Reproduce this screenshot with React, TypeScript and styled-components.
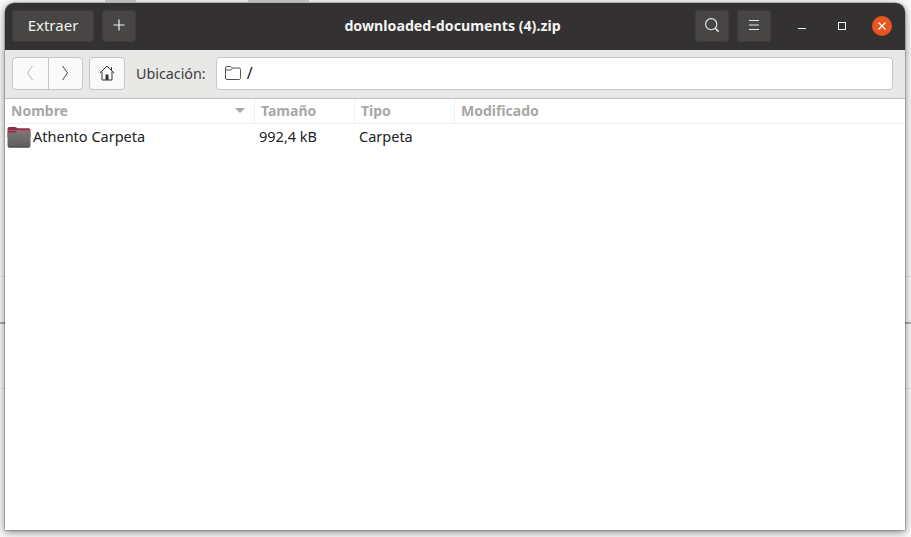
import React from "react";
import styled, { createGlobalStyle } from "styled-components";

const Global = createGlobalStyle`
  html, body { margin: 0; padding: 0; width: 911px; height: 537px; overflow: hidden; background: #fff; }
  * { box-sizing: border-box; }
`;

const Desktop = styled.div`
  width: 911px;
  height: 537px;
  padding: 3px 6px 7px 5px;
  font-family: "Noto Sans", sans-serif;
  background:
    linear-gradient(#a9adb2, #a9adb2) 0 322px / 100% 2px no-repeat,
    linear-gradient(#e2e2e2, #e2e2e2) 0 276px / 100% 1px no-repeat,
    linear-gradient(#e2e2e2, #e2e2e2) 0 388px / 100% 1px no-repeat,
    linear-gradient(#d0d0d0, #d0d0d0) 105px 0 / 31px 2px no-repeat,
    linear-gradient(#d0d0d0, #d0d0d0) 248px 0 / 61px 2px no-repeat,
    #fafafa;
`;

const Window = styled.div`
  width: 900px;
  height: 527px;
  display: flex;
  flex-direction: column;
  border-radius: 9px 9px 0 0;
  background: #fff;
  box-shadow: 0 0 0 0.5px rgba(0, 0, 0, 0.35), 0 2px 9px rgba(0, 0, 0, 0.5);
  overflow: hidden;
`;

const TitleBar = styled.header`
  height: 47px;
  flex: none;
  display: flex;
  align-items: center;
  padding: 0 3px 1px 7px;
  background: #333131;
  color: #fff;
`;

const HeaderButton = styled.button<{ $w: number }>`
  width: ${(p) => p.$w}px;
  height: 32px;
  flex: none;
  margin-right: 8px;
  padding: 0 0 2px;
  display: flex;
  align-items: center;
  justify-content: center;
  border: 0;
  border-radius: 4px;
  background: #474645;
  box-shadow: inset 0 0 0 1px #3e3d3c;
  color: #f2f2f2;
  font: 15px "Noto Sans", sans-serif;
`;

const Title = styled.h1`
  flex: 1;
  margin: 0;
  padding: 0 0 2px 66px;
  text-align: center;
  font-size: 14.2px;
  font-weight: 700;
  color: #f4f4f4;
`;

const WindowControls = styled.div`
  display: flex;
  flex: none;
  margin-left: 3px;
`;

const WindowControl = styled.button`
  width: 40px;
  height: 32px;
  padding: 0;
  display: flex;
  align-items: center;
  justify-content: center;
  border: 0;
  background: none;
`;

const CloseDot = styled.span`
  width: 20px;
  height: 20px;
  border-radius: 50%;
  background: #e95420;
  display: flex;
  align-items: center;
  justify-content: center;
`;

const LocationBar = styled.nav`
  height: 49px;
  flex: none;
  display: flex;
  align-items: center;
  padding: 0 12px 2px 7px;
  background: #e8e8e7;
  border-bottom: 1px solid #bdbdbd;
`;

const NavGroup = styled.div`
  display: flex;
  height: 33px;
  margin-right: 6px;
  border: 1px solid #c6c6c4;
  border-radius: 4px;
  background: #fafafa;
  overflow: hidden;
`;

const NavButton = styled.button`
  width: 34.5px;
  padding: 0;
  display: flex;
  align-items: center;
  justify-content: center;
  border: 0;
  background: none;
  & + & { border-left: 1px solid #c6c6c4; }
`;

const HomeButton = styled(NavButton)`
  width: 34px;
`;

const LocationLabel = styled.span`
  margin: 0 10px 0 5px;
  font-size: 14.3px;
  color: #3d3d3d;
`;

const PathField = styled.div`
  flex: 1;
  height: 33px;
  display: flex;
  align-items: center;
  gap: 6px;
  padding-left: 8px;
  border: 1px solid #c6c6c4;
  border-radius: 4px;
  background: #fff;
  font-size: 16px;
  color: #222;
`;

const Columns = styled.div`
  display: grid;
  grid-template-columns: 249px 100px 100px 1fr;
`;

const HeaderRow = styled(Columns)`
  height: 25px;
  flex: none;
  border-bottom: 1px solid #f0f0ef;
`;

const HeaderCell = styled.div`
  display: flex;
  align-items: center;
  justify-content: space-between;
  padding: 0 9px 1px 6px;
  font-size: 14px;
  font-weight: 700;
  color: #a7a7a5;
  & + & { border-left: 1px solid #f0f0ef; }
`;

const Caret = styled.span`
  width: 0;
  height: 0;
  border-left: 5px solid transparent;
  border-right: 5px solid transparent;
  border-top: 5px solid #a7a7a5;
`;

const FileRow = styled(Columns)`
  height: 25px;
  flex: none;
  align-items: center;
  font-size: 14.5px;
  color: #222;
`;

const NameCell = styled.div`
  display: flex;
  align-items: center;
  gap: 2px;
  padding-left: 2px;
`;

const FileName = styled.span`
  margin-bottom: 2px;
`;

const DataCell = styled.div`
  padding: 0 0 2px 5px;
`;

const FolderIcon = () => (
  <svg width="24" height="24" viewBox="0 0 24 24">
    <defs>
      <linearGradient id="folderFront" x1="0" y1="0" x2="0" y2="1">
        <stop offset="0" stopColor="#7b7978" />
        <stop offset="1" stopColor="#5f5d5c" />
      </linearGradient>
    </defs>
    <path d="M.5 4a2 2 0 0 1 2-2h5.500c1.200 0 1.600 1.200 3 1.200h10.500a2 2 0 0 1 2 2V12H.5z" fill="#8d2c4c" />
    <path d="M1 5.500h22" stroke="#c9625d" strokeWidth="1" fill="none" opacity=".7" />
    <path d="M.5 8.500a1 1 0 0 1 1-1h6.300c1 0 1.600-1.600 2.800-1.600h12.400a.5.500 0 0 1 .5.500v14.100a2 2 0 0 1-2 2h-19a2 2 0 0 1-2-2z" fill="url(#folderFront)" />
    <path d="M1.500 22h21" stroke="#444342" strokeWidth="1" />
  </svg>
);

const App = () => (
  <>
    <Global />
    <Desktop>
      <Window>
        <TitleBar>
          <HeaderButton $w={82}>Extraer</HeaderButton>
          <HeaderButton $w={34}>
            <svg width="14" height="14" viewBox="0 0 14 14"><path d="M7 1.500v11M1.500 7h11" stroke="#f2f2f2" strokeWidth="1.2" /></svg>
          </HeaderButton>
          <Title>downloaded-documents (4).zip</Title>
          <HeaderButton $w={34}>
            <svg width="16" height="16" viewBox="0 0 16 16" fill="none" stroke="#e8e8e8" strokeWidth="1.1"><circle cx="7.200" cy="7.200" r="5.600" /><path d="M11.200 11.200l3.400 3.400" strokeWidth="1.500" /></svg>
          </HeaderButton>
          <HeaderButton $w={34}>
            <svg width="12" height="12" viewBox="0 0 12 12" stroke="#e8e8e8" strokeWidth="1"><path d="M1 1.500h10M1 6h10M1 10.500h10" /></svg>
          </HeaderButton>
          <WindowControls>
            <WindowControl>
              <svg width="10" height="10" viewBox="0 0 10 10"><path d="M1 7.500h8" stroke="#f2f2f2" strokeWidth="1" /></svg>
            </WindowControl>
            <WindowControl>
              <svg width="10" height="10" viewBox="0 0 10 10" fill="none"><rect x="1.500" y="1.500" width="7" height="7" stroke="#f2f2f2" strokeWidth="1" /></svg>
            </WindowControl>
            <WindowControl>
              <CloseDot>
                <svg width="10" height="10" viewBox="0 0 10 10"><path d="M1.500 1.500l7 7M8.500 1.500l-7 7" stroke="#fff" strokeWidth="1.300" /></svg>
              </CloseDot>
            </WindowControl>
          </WindowControls>
        </TitleBar>
        <LocationBar>
          <NavGroup>
            <NavButton>
              <svg width="8" height="16" viewBox="0 0 8 16" fill="none" stroke="#b4b4b4" strokeWidth="1"><path d="M6.500 1L1.500 8l5 7" /></svg>
            </NavButton>
            <NavButton>
              <svg width="8" height="16" viewBox="0 0 8 16" fill="none" stroke="#4a4a4a" strokeWidth="1"><path d="M1.500 1l5 7-5 7" /></svg>
            </NavButton>
          </NavGroup>
          <NavGroup>
            <HomeButton>
              <svg width="16" height="16" viewBox="0 0 16 16" fill="none" stroke="#333" strokeWidth="1"><path d="M.8 8L8 1.200 15.200 8M12.500 2v3.300" /><path d="M3 6.500v8.500h10V6.500" /><rect x="6.500" y="9.500" width="3" height="5.500" fill="#333" stroke="none" /></svg>
            </HomeButton>
          </NavGroup>
          <LocationLabel>Ubicación:</LocationLabel>
          <PathField>
            <svg width="16" height="14" viewBox="0 0 16 14" fill="none" stroke="#555" strokeWidth="1"><path d="M.5 3V2a1.500 1.500 0 0 1 1.500-1.500h3.300c.8 0 1.200 1.500 2 1.500h6.700a1.500 1.500 0 0 1 1.500 1.500v8A1.500 1.500 0 0 1 14 13.500H2A1.500 1.500 0 0 1 .5 12zM.5 4h5.500c.8 0 1-2 1.500-2" /></svg>
            /
          </PathField>
        </LocationBar>
        <HeaderRow>
          <HeaderCell>Nombre<Caret /></HeaderCell>
          <HeaderCell>Tamaño</HeaderCell>
          <HeaderCell>Tipo</HeaderCell>
          <HeaderCell>Modificado</HeaderCell>
        </HeaderRow>
        <FileRow>
          <NameCell><FolderIcon /><FileName>Athento Carpeta</FileName></NameCell>
          <DataCell>992,4 kB</DataCell>
          <DataCell>Carpeta</DataCell>
        </FileRow>
      </Window>
    </Desktop>
  </>
);

export default App;
